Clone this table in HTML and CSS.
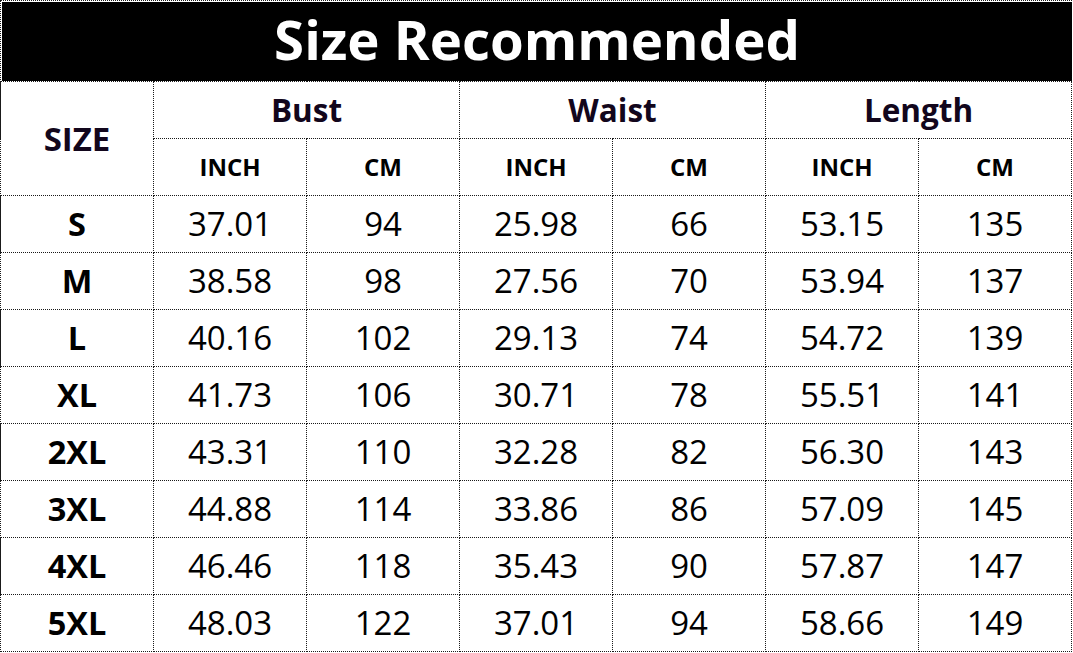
FILE: index.html
```html
<!DOCTYPE html>
<html>
<head>
<meta charset="utf-8">
<link rel="stylesheet" href="styles.css">
</head>
<body>
<div class="sheet">
  <div class="title">Size Recommended</div>
  <table class="chart">
    <colgroup>
      <col class="c"><col class="c"><col class="c"><col class="c"><col class="c"><col class="c"><col class="c">
    </colgroup>
    <thead>
      <tr class="r">
        <th rowspan="2" class="size-h">SIZE</th>
        <th colspan="2" class="grp">Bust</th>
        <th colspan="2" class="grp">Waist</th>
        <th colspan="2" class="grp">Length</th>
      </tr>
      <tr class="r">
        <th class="unit">INCH</th><th class="unit">CM</th>
        <th class="unit">INCH</th><th class="unit">CM</th>
        <th class="unit">INCH</th><th class="unit">CM</th>
      </tr>
    </thead>
    <tbody>
      <tr class="r"><th class="sz">S</th><td>37.01</td><td>94</td><td>25.98</td><td>66</td><td>53.15</td><td>135</td></tr>
      <tr class="r"><th class="sz">M</th><td>38.58</td><td>98</td><td>27.56</td><td>70</td><td>53.94</td><td>137</td></tr>
      <tr class="r"><th class="sz">L</th><td>40.16</td><td>102</td><td>29.13</td><td>74</td><td>54.72</td><td>139</td></tr>
      <tr class="r"><th class="sz">XL</th><td>41.73</td><td>106</td><td>30.71</td><td>78</td><td>55.51</td><td>141</td></tr>
      <tr class="r"><th class="sz">2XL</th><td>43.31</td><td>110</td><td>32.28</td><td>82</td><td>56.30</td><td>143</td></tr>
      <tr class="r"><th class="sz">3XL</th><td>44.88</td><td>114</td><td>33.86</td><td>86</td><td>57.09</td><td>145</td></tr>
      <tr class="r"><th class="sz">4XL</th><td>46.46</td><td>118</td><td>35.43</td><td>90</td><td>57.87</td><td>147</td></tr>
      <tr class="r"><th class="sz">5XL</th><td>48.03</td><td>122</td><td>37.01</td><td>94</td><td>58.66</td><td>149</td></tr>
    </tbody>
  </table>
</div>
</body>
</html>
```
FILE: styles.css
```css
html, body {
  margin: 0;
  padding: 0;
  background: #fff;
}
body {
  font-family: "Open Sans", "Noto Sans", "DejaVu Sans", sans-serif;
  color: #000;
}
.sheet {
  width: 1072px;
  border-top: 1px dotted #1a1a1a;
  border-left: 1px dotted #1a1a1a;
  box-sizing: border-box;
}
.title {
  margin: 1px 0 0 1px;
  height: 79px;
  background: #000;
  color: #fff;
  font-weight: 700;
  font-size: 54.5px;
  line-height: 75px;
  text-align: center;
  letter-spacing: 0;
}
.chart {
  border-collapse: collapse;
  table-layout: fixed;
  width: 1071px;
  margin-left: -1px;
}
.c {
  width: 153px;
}
.r {
  height: 57px;
}
.chart th, .chart td {
  border: 1px dotted #1a1a1a;
  padding: 0;
  line-height: 40px;
  text-align: center;
  vertical-align: middle;
}
.chart td {
  font-size: 33px;
  font-weight: 400;
}
.size-h {
  font-size: 33px;
  font-weight: 700;
  color: #12061c;
}
.grp {
  font-size: 31.5px;
  font-weight: 700;
  color: #12061c;
  padding-bottom: 2px;
}
.unit {
  font-size: 24px;
  font-weight: 700;
  color: #000;
}
.sz {
  font-size: 32.5px;
  font-weight: 700;
}
```
